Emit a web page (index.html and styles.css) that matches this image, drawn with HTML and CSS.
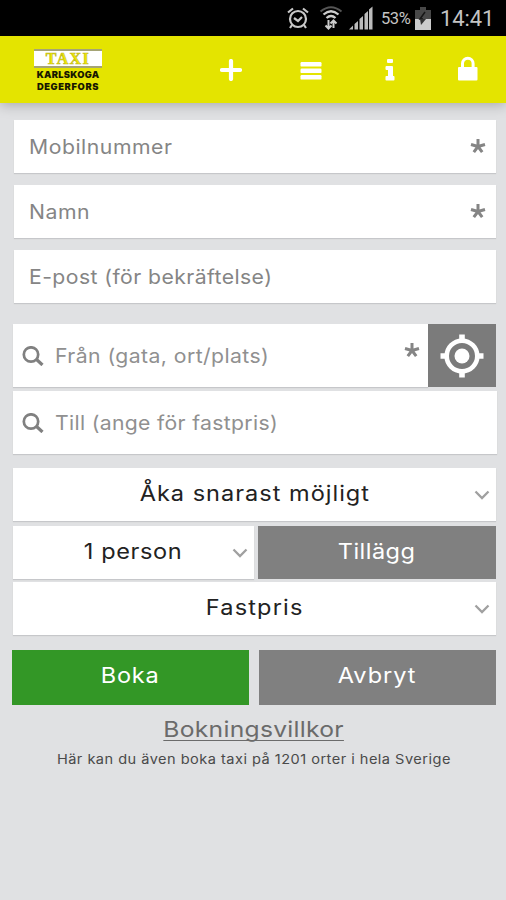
FILE: index.html
```html
<!DOCTYPE html>
<html lang="sv">
<head>
<meta charset="utf-8">
<title>Taxi Karlskoga Degerfors</title>
<link rel="stylesheet" href="styles.css">
</head>
<body>
<div class="status">
  <svg class="s-alarm" width="22" height="24" viewBox="0 0 22 24" fill="none" stroke="#c8c8c8" stroke-width="2.200"><circle cx="11" cy="13" r="8"/><path d="M7 12l4 3 4-4M1 6.500L6 2.500M21 6.500L16 2.500M5 19l-2 3M17 19l2 3"/></svg>
  <svg class="s-wifi" width="24" height="26" viewBox="0 0 24 26" fill="none"><path d="M1.500 6.500Q12-2 22.500 6.500" stroke="#555" stroke-width="2"/><path d="M4.500 9.500Q12 3 19.500 9.500M7.500 13Q12 9 16.500 13" stroke="#ccc" stroke-width="2.300"/><path d="M9.500 15v8M6.500 20.500l3 3 3-3M14.500 23v-7M11.500 18.500l3-3 3 3" stroke="#ccc" stroke-width="2"/></svg>
  <svg class="s-signal" width="24" height="24" viewBox="0 0 24 24" fill="#bbb"><path d="M0 23.500l4-4v4zM5.500 18l3.500-3v8.500H5.500zM10.500 13l3.500-3v13.500h-3.500zM15.500 8l3.500-3v18.500h-3.500z"/><path d="M20 3.500l3.500-3v23H20z"/></svg>
  <span class="s-pct">53%</span>
  <svg class="s-bat" width="16" height="23" viewBox="0 0 16 23"><path fill="#484848" d="M5 0h6v3h5v9H0V3h5z"/><path fill="#ccc" d="M0 12h16v11H0z"/><path d="M10 5l-5 7h3" fill="none" stroke="#161616" stroke-width="1.500"/><path d="M5 12h6l-5 6" fill="#333"/></svg>
  <span class="s-time">14:41</span>
</div>
<header class="bar">
  <div class="logo">
    <div class="logo-sign"><span>TAXI</span></div>
    <div class="logo-a">KARLSKOGA</div>
    <div class="logo-b">DEGERFORS</div>
  </div>
  <nav class="nav">
    <svg width="22" height="22" viewBox="0 0 22 22"><path d="M11 2v18M2 11h18" stroke="#fff" stroke-width="4.200" stroke-linecap="round"/></svg>
    <svg width="22" height="22" viewBox="0 0 22 22" fill="#fff"><rect x=".5" y="3" width="21" height="4.600" rx="1.200"/><rect x=".5" y="9.500" width="21" height="4.600" rx="1.200"/><rect x=".5" y="16" width="21" height="4.600" rx="1.200"/></svg>
    <svg width="10" height="22" viewBox="0 0 10 22" fill="#fff"><rect x="2" y="0" width="6" height="4" rx="1"/><path d="M1.500 7h5.500q1 0 1 1v9h.7q.8 0 .8 1v2.500q0 1-.8 1H1.300q-.8 0-.8-1V18q0-1 .8-1H3v-6H1.500q-1 0-1-1V8q0-1 1-1z"/></svg>
    <svg width="20" height="25" viewBox="0 0 20 25"><rect x="0" y="11" width="19.500" height="13.500" rx="1" fill="#fff"/><path d="M4.500 12V7.500a5.300 5.300 0 0 1 10.600 0V12" fill="none" stroke="#fff" stroke-width="3"/></svg>
  </nav>
</header>
<main class="form">
  <div class="field"><span class="t-mobil">Mobilnummer</span><svg class="star"><use href="#star"/></svg></div>
  <div class="field"><span class="t-mobil">Namn</span><svg class="star"><use href="#star"/></svg></div>
  <div class="field"><span class="t-epost">E-post (för bekräftelse)</span></div>

  <div class="from-row">
    <div class="search"><svg class="mag"><use href="#mag"/></svg><span class="t-epost">Från (gata, ort/plats)</span><svg class="star"><use href="#star"/></svg></div>
    <button class="locate"><svg width="44" height="44" viewBox="0 0 44 44"><circle cx="22" cy="22" r="15.300" fill="none" stroke="#fff" stroke-width="4.600"/><circle cx="22" cy="22" r="7.500" fill="#fff"/><path d="M22 .5v7M22 36.500v7M.5 22h7M36.500 22h7" stroke="#fff" stroke-width="5.600"/></svg></button>
  </div>
  <div class="search to"><svg class="mag"><use href="#mag"/></svg><span class="t-till">Till (ange för fastpris)</span></div>

  <div class="select when"><span class="t-aka">Åka snarast möjligt</span><svg class="chev"><use href="#chev"/></svg></div>
  <div class="pair people">
    <div class="select"><span class="t-person">1 person</span><svg class="chev"><use href="#chev"/></svg></div>
    <button class="btn"><span class="t-tillagg">Tillägg</span></button>
  </div>
  <div class="select price"><span class="t-fast">Fastpris</span><svg class="chev"><use href="#chev"/></svg></div>
  <div class="pair actions">
    <button class="btn go"><span class="t-boka">Boka</span></button>
    <button class="btn"><span class="t-avbryt">Avbryt</span></button>
  </div>
  <a class="terms">Bokningsvillkor</a>
  <p class="note">Här kan du även boka taxi på 1201 orter i hela Sverige</p>
</main>
<svg class="defs" width="0" height="0">
  <symbol id="star" viewBox="0 0 16 16"><path d="M8 8.500V1M8 8.500L1 6.500M8 8.500l7-2M8 8.500L3.800 14.200M8 8.500l4.200 5.700" stroke="#858585" stroke-width="3"/></symbol>
  <symbol id="mag" viewBox="0 0 22 20"><circle cx="9" cy="8.500" r="7.200" fill="none" stroke="#808080" stroke-width="2.700"/><path d="M14 13l6.500 6" stroke="#808080" stroke-width="3.200"/></symbol>
  <symbol id="chev" viewBox="0 0 16 10"><path d="M1.500 1.500L8 8l6.500-6.500" fill="none" stroke="#a0a0a0" stroke-width="2.300"/></symbol>
</svg>
</body>
</html>
```
FILE: styles.css
```css
* { box-sizing: border-box; }
body {
  margin: 0;
  height: 900px;
  overflow: hidden;
  background: #e0e1e3;
  font-family: Inter, "Liberation Sans", sans-serif;
  color: #222;
}
span, a, p { white-space: nowrap; }
button { border: 0; padding: 0; font: inherit; }
.defs { display: block; }

.status {
  height: 36px;
  background: #000;
  display: flex;
  align-items: center;
  padding-left: 287px;
  color: #c4c4c4;
  font-family: Roboto, sans-serif;
}
.s-wifi { margin-left: 10px; }
.s-signal { margin-left: 6px; }
.s-pct { margin-left: 8px; width: 30px; font-size: 16.5px; letter-spacing: -.4px; }
.s-bat { margin-left: 4px; }
.s-time { margin-left: 9px; font-size: 22px; letter-spacing: -.1px; }

.bar {
  height: 67px;
  background: #e4e400;
  display: flex;
  box-shadow: 0 2px 12px rgba(0, 0, 0, .25);
}
.logo {
  width: 68px;
  margin: 13px 0 0 34px;
  text-align: center;
  font: 900 9.3px/12px Inter, sans-serif;
  color: #181800;
}
.logo-sign {
  height: 19px;
  margin-bottom: 1px;
  background: #fff;
  border-top: 2px solid #a5a475;
  border-bottom: 2px solid #a5a475;
  font: 700 16px/15px "Liberation Serif", serif;
  letter-spacing: 1.4px;
  color: #f0e800;
  -webkit-text-stroke: .6px #c0b820;
}
.logo-a { letter-spacing: .3px; }
.logo-b { letter-spacing: .65px; }
.nav {
  display: flex;
  align-items: center;
  flex: 1;
  padding-left: 118px;
}
.nav svg + svg { margin-left: 58px; }
.nav svg:nth-child(3) { margin-left: 63px; }
.nav svg:nth-child(4) { margin-left: 63px; margin-top: -3px; }

.form { padding: 17px 10px 0 13px; display: flex; flex-direction: column; }
.field, .search, .select {
  background: #fff;
  display: flex;
  align-items: center;
  box-shadow: 0 1px 1px #c6c7ca;
}
.field {
  height: 53px;
  margin: 0 0 12px 1px;
  padding: 0 10px 0 15px;
  font-size: 20px;
  color: #858585;
}
.field span, .search span {
  transform: scaleX(1.06);
  transform-origin: left;
}
.t-mobil { letter-spacing: .5px; }
.t-epost { letter-spacing: .4px; }
.t-till { letter-spacing: .3px; }
.field:nth-child(3) { margin-bottom: 21px; }
.star { width: 16px; height: 16px; margin-left: auto; }
.field .star { margin-top: -1px; }
.from-row { display: flex; height: 63px; }
.search { height: 63px; padding: 0 9px; font-size: 20px; color: #909090; }
.from-row .search { flex: 1; padding-right: 8px; }
.from-row .star { margin-top: -11px; }
.mag { width: 22px; height: 20px; margin-right: 11px; }
.locate {
  width: 68px;
  background: #7b7b7b;
  display: flex;
  align-items: center;
  justify-content: center;
}
.to { margin: 4px -1px 0 0; }
.select {
  position: relative;
  height: 53px;
  justify-content: center;
  font-size: 21px;
  padding-bottom: 2px;
}
.select span, .btn span { display: inline-block; transform: scaleX(1.12); }
.t-aka { letter-spacing: .9px; }
.t-person { letter-spacing: .55px; }
.t-tillagg { letter-spacing: .4px; }
.t-fast { letter-spacing: 1.05px; }
.t-boka { letter-spacing: .65px; }
.t-avbryt { letter-spacing: .85px; }
.select .chev { position: absolute; right: 6px; top: 22px; }
.chev { width: 16px; height: 10px; }
.when { margin-top: 14px; }
.pair { display: grid; }
.people { grid-template-columns: 241px 238px; gap: 4px; margin: 5px 0 3px; height: 53px; }
.people .select { padding-right: 2px; }
.btn { background: #808080; color: #fff; font-size: 21px; padding-bottom: 3px; }
.go { background: #339726; }
.actions { grid-template-columns: 237px 237px; gap: 10px; margin: 15px 0 0 -1px; height: 55px; }
.actions .btn { padding-bottom: 5px; }
.terms {
  align-self: center;
  margin: 11px 2px 0 0;
  font-size: 22px;
  line-height: 27px;
  letter-spacing: .25px;
  transform: scaleX(1.12);
  color: #6b6b6b;
  text-decoration: underline;
  text-underline-offset: 3px;
  text-decoration-thickness: 1px;
  text-decoration-skip-ink: none;
}
.note {
  align-self: center;
  margin: 7px 2px 0 0;
  font-size: 13px;
  line-height: 18px;
  letter-spacing: .43px;
  transform: scaleX(1.12);
  color: #4a4a4a;
}
```
